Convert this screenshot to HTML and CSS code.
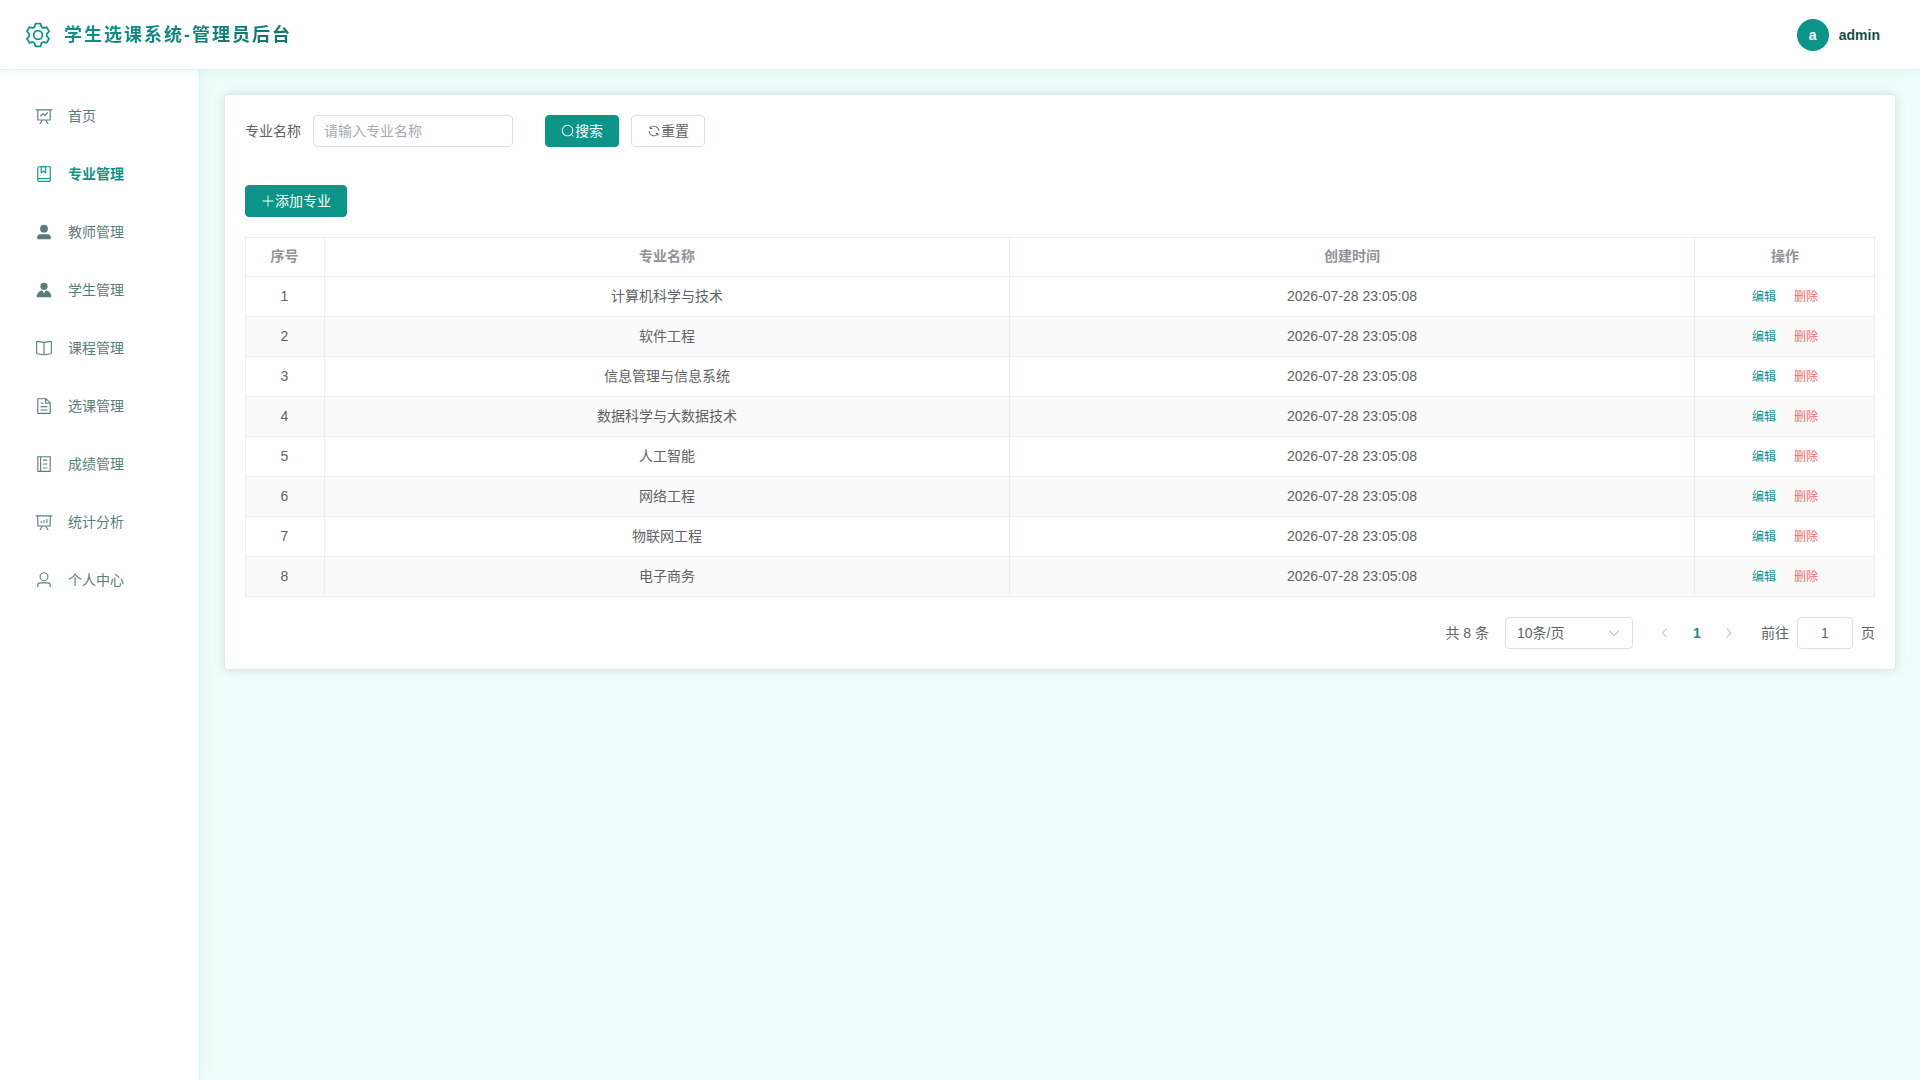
FILE: index.html
```
<!DOCTYPE html>
<html lang="zh-CN">
<head>
  <meta charset="UTF-8">
  <meta name="viewport" content="width=device-width, initial-scale=1.0">
  <title>学生选课系统-管理员后台</title>
  <link rel="stylesheet" href="styles.css">
</head>
<body>
  <header class="header">
    <div class="brand">
      <svg class="brand-icon" viewBox="0 0 1024 1024"><path d="M600.704 64a32 32 0 0 1 30.464 22.208l35.2 109.376c14.784 7.232 28.928 15.36 42.432 24.512l112.384-24.192a32 32 0 0 1 34.432 15.36L944.32 364.8a32 32 0 0 1-4.032 37.504l-77.12 85.12a357.12 357.12 0 0 1 0 49.024l77.12 85.248a32 32 0 0 1 4.032 37.504l-88.704 153.6a32 32 0 0 1-34.432 15.296L708.8 803.904c-13.44 9.088-27.648 17.28-42.368 24.512l-35.264 109.376A32 32 0 0 1 600.704 960H423.296a32 32 0 0 1-30.464-22.208L357.696 828.48a351.616 351.616 0 0 1-42.56-24.64l-112.32 24.256a32 32 0 0 1-34.432-15.36L79.68 659.2a32 32 0 0 1 4.032-37.504l77.12-85.248a357.12 357.12 0 0 1 0-48.896l-77.12-85.248A32 32 0 0 1 79.68 364.8l88.704-153.6a32 32 0 0 1 34.432-15.296l112.32 24.256c13.568-9.152 27.776-17.408 42.56-24.64l35.2-109.312A32 32 0 0 1 423.232 64H600.64zm-23.424 64H446.72l-36.352 113.088-24.512 11.968a294.113 294.113 0 0 0-34.816 20.096l-22.656 15.36-116.224-25.088-65.28 113.152 79.68 88.192-1.92 27.136a293.12 293.12 0 0 0 0 40.192l1.92 27.136-79.808 88.192 65.344 113.152 116.224-25.024 22.656 15.296a294.113 294.113 0 0 0 34.816 20.096l24.512 11.968L446.72 896h130.688l36.48-113.152 24.448-11.904a288.282 288.282 0 0 0 34.752-20.096l22.592-15.296 116.288 25.024 65.28-113.152-79.744-88.192 1.92-27.136a293.12 293.12 0 0 0 0-40.256l-1.92-27.136 79.808-88.128-65.344-113.152-116.288 24.96-22.592-15.232a287.616 287.616 0 0 0-34.752-20.096l-24.448-11.904L577.344 128zM512 320a192 192 0 1 1 0 384 192 192 0 0 1 0-384zm0 64a128 128 0 1 0 0 256 128 128 0 0 0 0-256z"/></svg>
      <span class="brand-title">学生选课系统-管理员后台</span>
    </div>
    <div class="user">
      <span class="avatar">a</span>
      <span class="username">admin</span>
    </div>
  </header>

  <div class="layout">
    <nav class="sidebar">
      <a class="menu-item" href="#">
        <svg viewBox="0 0 1024 1024"><path d="M359.168 768H160a32 32 0 0 1-32-32V192H64a32 32 0 0 1 0-64h896a32 32 0 1 1 0 64h-64v544a32 32 0 0 1-32 32H665.216l110.848 192h-73.856L591.36 768H433.024L322.176 960H248.32l110.848-192zM832 192H192v512h640V192zM342.656 534.656a32 32 0 1 1-45.312-45.312L444.992 341.76l125.44 94.08L679.04 300.032a32 32 0 1 1 49.92 39.936L581.632 524.224 451.008 426.24 342.656 534.592z"/></svg>
        <span>首页</span>
      </a>
      <a class="menu-item active" href="#">
        <svg viewBox="0 0 1024 1024"><path d="M192 736h640V128H256a64 64 0 0 0-64 64v544zm64-672h608a32 32 0 0 1 32 32v672a32 32 0 0 1-32 32H160l-32 57.536V192A128 128 0 0 1 256 64z"/><path d="M240 800a48 48 0 1 0 0 96h592v-96H240zm0-64h656v160a64 64 0 0 1-64 64H240a112 112 0 0 1 0-224zm144-608v250.88l96-76.8 96 76.8V128H384zm-64-64h320v381.44a32 32 0 0 1-51.968 24.96L480 384l-108.032 86.4A32 32 0 0 1 320 445.44V64z"/></svg>
        <span>专业管理</span>
      </a>
      <a class="menu-item" href="#">
        <svg viewBox="0 0 1024 1024"><path d="M288 320a224 224 0 1 0 448 0 224 224 0 1 0-448 0zm544 608H160a32 32 0 0 1-32-32v-96a160 160 0 0 1 160-160h448a160 160 0 0 1 160 160v96a32 32 0 0 1-32 32z"/></svg>
        <span>教师管理</span>
      </a>
      <a class="menu-item" href="#">
        <svg viewBox="0 0 1024 1024"><path d="M628.736 528.896A416 416 0 0 1 928 928H96a415.872 415.872 0 0 1 299.264-399.104L512 704l116.736-175.104zM720 304a208 208 0 1 1-416 0 208 208 0 0 1 416 0z"/></svg>
        <span>学生管理</span>
      </a>
      <a class="menu-item" href="#">
        <svg viewBox="0 0 1024 1024"><path d="m512 863.36 384-54.848v-638.72L525.568 222.72a96 96 0 0 1-27.136 0L128 169.792v638.72l384 54.848zM137.024 106.432l370.432 52.928a32 32 0 0 0 9.088 0l370.432-52.928A64 64 0 0 1 960 169.792v638.72a64 64 0 0 1-54.976 63.36l-388.48 55.488a32 32 0 0 1-9.088 0l-388.48-55.488A64 64 0 0 1 64 808.512v-638.72a64 64 0 0 1 73.024-63.36z"/><path d="M480 192h64v704h-64z"/></svg>
        <span>课程管理</span>
      </a>
      <a class="menu-item" href="#">
        <svg viewBox="0 0 1024 1024"><path d="M832 384H576V128H192v768h640V384zm-26.496-64L640 154.496V320h165.504zM160 64h480l256 256v608a32 32 0 0 1-32 32H160a32 32 0 0 1-32-32V96a32 32 0 0 1 32-32zm160 448h384v64H320v-64zm0-192h160v64H320v-64zm0 384h384v64H320v-64z"/></svg>
        <span>选课管理</span>
      </a>
      <a class="menu-item" href="#">
        <svg viewBox="0 0 1024 1024"><path d="M480 320h192c21.33 0 32-10.67 32-32s-10.67-32-32-32H480c-21.33 0-32 10.67-32 32s10.67 32 32 32z"/><path d="M887.01 72.99C881.01 67 873.34 64 864 64H160c-9.35 0-17.02 3-23.01 8.99C131 78.99 128 86.66 128 96v832c0 9.35 2.99 17.02 8.99 23.01S150.66 960 160 960h704c9.35 0 17.02-2.99 23.01-8.99S896 937.34 896 928V96c0-9.35-3-17.02-8.99-23.01zM192 896V128h96v768h-96zm640 0H352V128h480v768z"/><path d="M480 544h192c21.33 0 32-10.67 32-32s-10.67-32-32-32H480c-21.33 0-32 10.67-32 32s10.67 32 32 32zM480 768h192c21.33 0 32-10.67 32-32s-10.67-32-32-32H480c-21.33 0-32 10.67-32 32s10.67 32 32 32z"/></svg>
        <span>成绩管理</span>
      </a>
      <a class="menu-item" href="#">
        <svg viewBox="0 0 1024 1024"><path d="m665.216 768 110.848 192h-73.856L591.36 768H433.024L322.176 960H248.32l110.848-192H160a32 32 0 0 1-32-32V192H64a32 32 0 0 1 0-64h896a32 32 0 1 1 0 64h-64v544a32 32 0 0 1-32 32H665.216zM832 192H192v512h640V192zM352 448a32 32 0 0 1 32 32v64a32 32 0 0 1-64 0v-64a32 32 0 0 1 32-32zm160-64a32 32 0 0 1 32 32v128a32 32 0 0 1-64 0V416a32 32 0 0 1 32-32zm160-64a32 32 0 0 1 32 32v192a32 32 0 1 1-64 0V352a32 32 0 0 1 32-32z"/></svg>
        <span>统计分析</span>
      </a>
      <a class="menu-item" href="#">
        <svg viewBox="0 0 1024 1024"><path d="M512 512a192 192 0 1 0 0-384 192 192 0 0 0 0 384zm0 64a256 256 0 1 1 0-512 256 256 0 0 1 0 512zm320 320v-96a96 96 0 0 0-96-96H288a96 96 0 0 0-96 96v96a32 32 0 1 1-64 0v-96a160 160 0 0 1 160-160h448a160 160 0 0 1 160 160v96a32 32 0 1 1-64 0z"/></svg>
        <span>个人中心</span>
      </a>
    </nav>

    <main class="main">
      <section class="card">
        <form class="search-form">
          <label for="majorName">专业名称</label>
          <input type="text" id="majorName" class="input" placeholder="请输入专业名称">
          <div class="form-buttons">
            <button type="button" class="btn btn-primary"><svg viewBox="0 0 1024 1024"><path d="m795.904 750.72 124.992 124.928a32 32 0 0 1-45.248 45.248L750.656 795.904a416 416 0 1 1 45.248-45.248zM480 832a352 352 0 1 0 0-704 352 352 0 0 0 0 704z"/></svg>搜索</button>
            <button type="reset" class="btn"><svg viewBox="0 0 1024 1024"><path d="M771.776 794.88A384 384 0 0 1 128 512h64a320 320 0 0 0 555.712 216.448H654.72a32 32 0 1 1 0-64h149.056a32 32 0 0 1 32 32v148.928a32 32 0 1 1-64 0v-50.56zM276.288 295.616h92.992a32 32 0 0 1 0 64H220.16a32 32 0 0 1-32-32V178.56a32 32 0 0 1 64 0v50.56A384 384 0 0 1 896.128 512h-64a320 320 0 0 0-555.776-216.384z"/></svg>重置</button>
          </div>
        </form>

        <button type="button" class="btn btn-primary"><svg viewBox="0 0 1024 1024"><path d="M480 480V128a32 32 0 0 1 64 0v352h352a32 32 0 1 1 0 64H544v352a32 32 0 1 1-64 0V544H128a32 32 0 0 1 0-64h352z"/></svg>添加专业</button>

        <table class="table">
          <colgroup>
            <col class="col-index">
            <col>
            <col>
            <col class="col-action">
          </colgroup>
          <thead>
            <tr><th>序号</th><th>专业名称</th><th>创建时间</th><th>操作</th></tr>
          </thead>
          <tbody>
            <tr><td>1</td><td>计算机科学与技术</td><td>2026-07-28 23:05:08</td><td><div class="actions"><button class="link-btn">编辑</button><button class="link-btn danger">删除</button></div></td></tr>
            <tr><td>2</td><td>软件工程</td><td>2026-07-28 23:05:08</td><td><div class="actions"><button class="link-btn">编辑</button><button class="link-btn danger">删除</button></div></td></tr>
            <tr><td>3</td><td>信息管理与信息系统</td><td>2026-07-28 23:05:08</td><td><div class="actions"><button class="link-btn">编辑</button><button class="link-btn danger">删除</button></div></td></tr>
            <tr><td>4</td><td>数据科学与大数据技术</td><td>2026-07-28 23:05:08</td><td><div class="actions"><button class="link-btn">编辑</button><button class="link-btn danger">删除</button></div></td></tr>
            <tr><td>5</td><td>人工智能</td><td>2026-07-28 23:05:08</td><td><div class="actions"><button class="link-btn">编辑</button><button class="link-btn danger">删除</button></div></td></tr>
            <tr><td>6</td><td>网络工程</td><td>2026-07-28 23:05:08</td><td><div class="actions"><button class="link-btn">编辑</button><button class="link-btn danger">删除</button></div></td></tr>
            <tr><td>7</td><td>物联网工程</td><td>2026-07-28 23:05:08</td><td><div class="actions"><button class="link-btn">编辑</button><button class="link-btn danger">删除</button></div></td></tr>
            <tr><td>8</td><td>电子商务</td><td>2026-07-28 23:05:08</td><td><div class="actions"><button class="link-btn">编辑</button><button class="link-btn danger">删除</button></div></td></tr>
          </tbody>
        </table>

        <div class="pagination">
          <span>共 8 条</span>
          <div class="select-wrap">
            <select class="input" aria-label="每页条数">
              <option selected>10条/页</option>
              <option>20条/页</option>
              <option>50条/页</option>
            </select>
            <svg viewBox="0 0 1024 1024"><path d="M831.872 340.864 512 652.672 192.128 340.864a30.592 30.592 0 0 0-42.752 0 29.12 29.12 0 0 0 0 41.6L489.664 714.24a32 32 0 0 0 44.672 0l340.288-331.712a29.12 29.12 0 0 0 0-41.728 30.592 30.592 0 0 0-42.752 0z"/></svg>
          </div>
          <div class="pager">
            <button type="button" disabled aria-label="上一页"><svg viewBox="0 0 1024 1024"><path d="M609.408 149.376 277.76 489.6a32 32 0 0 0 0 44.672l331.648 340.352a29.12 29.12 0 0 0 41.728 0 30.592 30.592 0 0 0 0-42.752L339.264 511.936l311.872-319.872a30.592 30.592 0 0 0 0-42.688 29.12 29.12 0 0 0-41.728 0z"/></svg></button>
            <button type="button" class="current">1</button>
            <button type="button" disabled aria-label="下一页"><svg viewBox="0 0 1024 1024"><path d="M340.864 149.312a30.592 30.592 0 0 0 0 42.752L652.736 512 340.864 831.872a30.592 30.592 0 0 0 0 42.752 29.12 29.12 0 0 0 41.728 0L714.24 534.336a32 32 0 0 0 0-44.672L382.592 149.376a29.12 29.12 0 0 0-41.728 0z"/></svg></button>
          </div>
          <div class="jump">
            <label for="jumpPage">前往</label>
            <input type="text" id="jumpPage" class="input" value="1">
            <span>页</span>
          </div>
        </div>
      </section>
    </main>
  </div>
</body>
</html>
```
FILE: styles.css
```
* {
  box-sizing: border-box;
}
body {
  margin: 0;
  min-height: 100vh;
  display: flex;
  flex-direction: column;
  font-family: "Liberation Sans", "Noto Sans CJK SC", sans-serif;
  font-size: 14px;
  line-height: 20px;
  color: #606266;
  background-color: #f0fdfa;
}
svg {
  display: block;
  fill: currentColor;
}
button, input, select {
  font-family: inherit;
  font-size: 14px;
  color: #606266;
}

/* Header */
.header {
  position: relative;
  z-index: 2;
  height: 70px;
  padding: 0 40px 0 24px;
  display: flex;
  align-items: center;
  justify-content: space-between;
  background-color: #fff;
  border-bottom: 1px solid #ccfbf1;
  box-shadow: 0 2px 12px rgba(13, 148, 136, 0.08);
}
.brand {
  display: flex;
  align-items: center;
  gap: 12px;
  color: #0d9488;
}
.brand-icon {
  width: 28px;
  height: 28px;
}
.brand-title {
  font-size: 18px;
  font-weight: 700;
  letter-spacing: 2px;
  color: transparent;
  background: linear-gradient(135deg, #0d9488, #0f766e);
  -webkit-background-clip: text;
  background-clip: text;
}
.user {
  display: flex;
  align-items: center;
  gap: 10px;
  font-weight: 600;
  color: #134e4a;
}
.avatar {
  width: 32px;
  height: 32px;
  border-radius: 50%;
  background-color: #0d9488;
  color: #fff;
  line-height: 32px;
  text-align: center;
}

/* Sidebar */
.layout {
  flex: 1;
  display: flex;
}
.sidebar {
  width: 200px;
  flex-shrink: 0;
  padding: 20px 12px;
  display: flex;
  flex-direction: column;
  gap: 6px;
  background-color: #fff;
  border-right: 1px solid #ccfbf1;
  box-shadow: 2px 0 12px rgba(13, 148, 136, 0.06);
}
.menu-item {
  height: 52px;
  padding: 0 23px;
  display: flex;
  align-items: center;
  gap: 15px;
  color: #5c7c7a;
  text-decoration: none;
}
.menu-item svg {
  width: 18px;
  height: 18px;
}
.menu-item.active {
  color: #0d9488;
  font-weight: 700;
}

/* Content card */
.main {
  flex: 1;
  min-width: 0;
  padding: 24px;
}
.card {
  padding: 20px;
  background-color: #fff;
  border: 1px solid #e4e7ed;
  border-radius: 4px;
  box-shadow: 0 0 12px rgba(0, 0, 0, 0.12);
}
.search-form {
  display: flex;
  align-items: center;
  margin-bottom: 38px;
}
.search-form label {
  margin-right: 12px;
}
.input {
  height: 32px;
  padding: 0 10px;
  border: 1px solid #dcdfe6;
  border-radius: 4px;
  background-color: #fff;
  outline: none;
}
.input::placeholder {
  color: #a8abb2;
}
.search-form .input {
  width: 200px;
}
.form-buttons {
  display: flex;
  gap: 12px;
  margin-left: 32px;
}
.btn {
  height: 32px;
  padding: 0 15px;
  display: flex;
  align-items: center;
  border: 1px solid #dcdfe6;
  border-radius: 4px;
  background-color: #fff;
  line-height: 20px;
  cursor: pointer;
}
.btn svg {
  width: 14px;
  height: 14px;
}
.btn-primary {
  background-color: #0d9488;
  border-color: #0d9488;
  color: #fff;
}

/* Table */
.table {
  width: 100%;
  margin: 20px 0;
  table-layout: fixed;
  border-collapse: separate;
  border-spacing: 0;
  line-height: 23px;
  text-align: center;
}
.col-index {
  width: 80px;
}
.col-action {
  width: 180px;
}
.table th, .table td {
  padding: 8px 12px;
  border-right: 1px solid #ebeef5;
  border-bottom: 1px solid #ebeef5;
}
.table th {
  padding-top: 7px;
  border-top: 1px solid #ebeef5;
  color: #909399;
  font-weight: 700;
}
.table th:first-child, .table td:first-child {
  padding-left: 11px;
  border-left: 1px solid #ebeef5;
}
.table th:last-child, .table td:last-child {
  padding-right: 11px;
}
.table tbody tr:nth-child(even) {
  background-color: #fafafa;
}
.actions {
  display: flex;
  justify-content: center;
  gap: 18px;
}
.link-btn {
  padding: 2px 0 0;
  border: none;
  background: none;
  font-size: 12px;
  line-height: 21px;
  color: #0d9488;
  cursor: pointer;
}
.link-btn.danger {
  color: #f56c6c;
}

/* Pagination */
.pagination {
  display: flex;
  align-items: center;
  justify-content: flex-end;
  gap: 16px;
}
.select-wrap {
  position: relative;
  width: 128px;
}
.select-wrap .input {
  width: 100%;
  padding: 0 11px;
  appearance: none;
}
.select-wrap svg {
  position: absolute;
  top: 9px;
  right: 12px;
  width: 14px;
  height: 14px;
  color: #a8abb2;
  pointer-events: none;
}
.pager {
  display: flex;
}
.pager button {
  width: 32px;
  height: 32px;
  padding: 0;
  display: flex;
  align-items: center;
  justify-content: center;
  border: none;
  background: none;
}
.pager button:disabled {
  color: #a8abb2;
}
.pager svg {
  width: 12px;
  height: 12px;
}
.pager .current {
  color: #0d9488;
  font-weight: 700;
}
.jump {
  display: flex;
  align-items: center;
  gap: 8px;
}
.jump .input {
  width: 56px;
  text-align: center;
}
```
